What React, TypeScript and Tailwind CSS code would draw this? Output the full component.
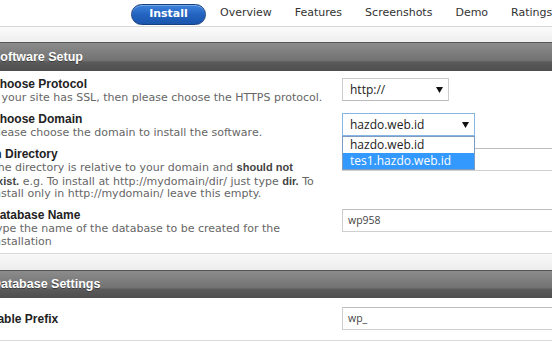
import React from "react";

const sans = "font-['DejaVu_Sans',Verdana,sans-serif]";
const boldFace = "font-['Liberation_Sans',Arial,sans-serif] font-bold";
const ui = "font-['Open_Sans',Arial,sans-serif]";

function Arrow() {
  return (
    <svg width="7" height="6" viewBox="0 0 7 6" className="shrink-0">
      <polygon points="0,0 7,0 3.5,6" fill="#111" />
    </svg>
  );
}

function SectionHeader({ title, h }: { title: string; h: string }) {
  return (
    <div
      className={`${h} flex items-center border-t border-[#555] bg-[linear-gradient(#8c8c8c,#727272_62%,#5a5a5a_68%,#4e4e4e)] pl-[1px] text-white text-[12.5px] ${boldFace} [text-shadow:0_1px_0_#3a3a3a]`}
    >
      {title}
    </div>
  );
}

function TextInput({ value }: { value: string }) {
  return (
    <div className={`h-[23px] w-full border border-[#cfcfcf] border-t-[#bdbdbd] bg-white pl-[5px] flex items-center text-[10.5px] text-[#444] ${ui}`}>
      {value}
    </div>
  );
}

function Label({ children }: { children: React.ReactNode }) {
  return <div className={`text-[12px] leading-[13px] text-[#222] ${boldFace}`}>{children}</div>;
}

function B({ children }: { children: React.ReactNode }) {
  return <span className={`text-[11px] text-[#444] ${boldFace}`}>{children}</span>;
}

export default function App() {
  return (
    <div className="w-[552px] h-[342px] overflow-hidden bg-white">
      <div className={`-ml-[9px] w-[590px] ${sans}`}>
        {/* tabs */}
        <div className="h-[27px] border-b border-[#d6d6d6] flex items-center whitespace-nowrap text-[11px] text-[#333]">
          <div className="ml-[140px] mt-[2px] h-[21px] w-[75px] rounded-full border border-[#17407e] bg-[linear-gradient(#3b82dc,#2364c0_50%,#1b55ad)] flex items-center justify-center text-white text-[11px] font-bold shadow-[inset_0_1px_0_rgba(255,255,255,0.3)]">
            Install
          </div>
          <span className="ml-[14px]">Overview</span>
          <span className="ml-[23px]">Features</span>
          <span className="ml-[23px]">Screenshots</span>
          <span className="ml-[23px]">Demo</span>
          <span className="ml-[23px]">Ratings</span>
        </div>
        <div className="h-[15px] bg-[linear-gradient(#fbfbfb,#eeeeee)]" />
        <SectionHeader title="Software Setup" h="h-[29px]" />

        {/* rows */}
        <div className="grid grid-cols-[351px_1fr] h-[36px] pt-[7px]">
          <div>
            <Label>Choose Protocol</Label>
            <div className="text-[11px] leading-[13px] text-[#666]">If your site has SSL, then please choose the HTTPS protocol.</div>
          </div>
          <div>
            <div className={`h-[23px] w-[107px] border border-[#cccccc] border-b-[#bbbbbb] bg-white flex items-center justify-between pl-[7px] pr-[5px] text-[12px] text-[#222] ${ui}`}>
              http://
              <Arrow />
            </div>
          </div>
        </div>

        <div className="grid grid-cols-[351px_1fr] h-[35px] pt-[6px] relative z-10">
          <div>
            <Label>Choose Domain</Label>
            <div className="text-[11px] leading-[13px] text-[#666]">Please choose the domain to install the software.</div>
          </div>
          <div>
            <div className="relative w-[133px]">
              <div className={`h-[23px] border border-[#86b6e6] bg-white flex items-center justify-between pl-[7px] pr-[5px] text-[12px] text-[#222] ${ui}`}>
                hazdo.web.id
                <Arrow />
              </div>
              <div className={`absolute left-0 top-full w-[133px] border border-[#7d9cc0] bg-white text-[12px] ${ui}`}>
                <div className="h-[16px] leading-[16px] pl-[7px] text-[#222]">hazdo.web.id</div>
                <div className="h-[16px] leading-[16px] pl-[7px] bg-[#3399ff] text-white">tes1.hazdo.web.id</div>
              </div>
            </div>
          </div>
        </div>

        <div className="grid grid-cols-[351px_1fr] h-[60px] pt-[6px]">
          <div>
            <Label>In Directory</Label>
            <div className="text-[11px] leading-[12.5px] text-[#666]">
              The directory is relative to your domain and <B>should not</B>
              <br />
              <B>exist.</B> e.g. To install at http://mydomain/dir/ just type <B>dir.</B> To
              <br />
              install only in http://mydomain/ leave this empty.
            </div>
          </div>
          <div>
            <TextInput value="" />
          </div>
        </div>

        <div className="grid grid-cols-[351px_1fr] h-[52px] pt-[7px] border-b border-[#dadada]">
          <div>
            <Label>Database Name</Label>
            <div className="text-[11px] leading-[13px] text-[#666]">
              Type the name of the database to be created for the
              <br />
              installation
            </div>
          </div>
          <div>
            <TextInput value="wp958" />
          </div>
        </div>

        <div className="h-[16px] bg-[linear-gradient(#f9f9f9,#ededed)]" />
        <SectionHeader title="Database Settings" h="h-[28px]" />

        <div className="grid grid-cols-[351px_1fr] items-start h-[43px] pt-[9px] pb-[10px] border-b border-[#dadada]">
          <div className="pt-[6px]">
            <Label>Table Prefix</Label>
          </div>
          <TextInput value="wp_" />
        </div>
      </div>
    </div>
  );
}
